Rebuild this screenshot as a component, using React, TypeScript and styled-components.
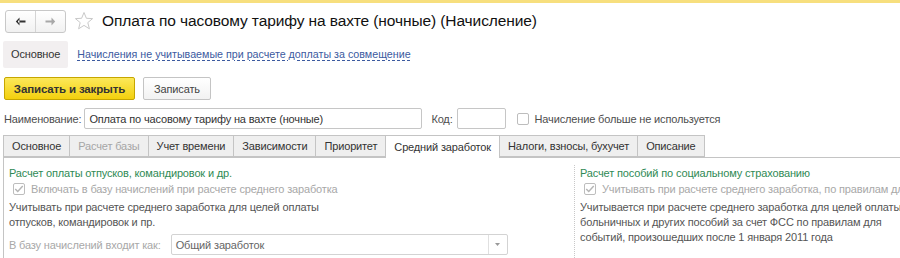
import React from "react";
import styled, { createGlobalStyle } from "styled-components";

const GlobalStyle = createGlobalStyle`
  html, body {
    margin: 0;
    padding: 0;
    background: #fff;
    font-family: "Liberation Sans", Arial, sans-serif;
    color: #4d4d4d;
  }
`;

const Page = styled("div")`
  width: 900px;
  height: 258px;
  overflow: hidden;
  border-top: 3px solid #f7df7e;
  box-sizing: border-box;
  font-size: 11px;
  letter-spacing: -0.15px;
`;

const Header = styled("div")`
  display: flex;
  align-items: center;
  height: 33px;
  padding: 3px 0 0 5px;
  box-sizing: border-box;
`;

const NavGroup = styled("div")`
  display: flex;
  height: 21px;
  border: 1px solid #c8c8c8;
  border-radius: 3px;
  background: linear-gradient(#ffffff, #f1f1f1);
`;

const NavButton = styled("div")<{ $first?: boolean }>`
  width: 29px;
  display: flex;
  align-items: center;
  justify-content: center;
  ${({ $first }) => $first && `border-right: 1px solid #d4d4d4;`}
`;

const Star = styled("div")`
  margin-left: 8px;
  width: 20px;
  height: 20px;
  display: flex;
`;

const Title = styled("h1")`
  margin: 0 0 0 8px;
  font-size: 15.5px;
  letter-spacing: -0.1px;
  font-weight: normal;
  color: #111;
  white-space: nowrap;
`;

const SubNav = styled("div")`
  display: flex;
  align-items: center;
  gap: 9px;
  padding: 3px 0 0 3px;
  height: 30px;
`;

const SubNavTab = styled("div")`
  height: 27px;
  padding: 0 8px;
  display: flex;
  align-items: center;
  background: #f2eff0;
  border-radius: 2px;
  color: #333;
`;

const SubNavLink = styled("a")`
  font-size: 10.7px;
  letter-spacing: 0;
  color: #3c5aa0;
  text-decoration: underline dashed;
  text-underline-offset: 2px;
  text-decoration-thickness: 1px;
`;

const Toolbar = styled("div")`
  display: flex;
  gap: 8px;
  padding: 8px 0 0 4px;
`;

const Button = styled("div")<{ $primary?: boolean }>`
  height: 23px;
  box-sizing: border-box;
  display: flex;
  align-items: center;
  justify-content: center;
  white-space: nowrap;
  border-radius: 2px;
  ${({ $primary }) =>
    $primary
      ? `
    background: linear-gradient(#fce85a, #f3d00e);
    border: 1px solid #c6a600;
    font-weight: bold;
    font-size: 11.5px;
    color: #333;
    width: 131px;
  `
      : `
    background: linear-gradient(#ffffff, #f2f2f2);
    border: 1px solid #c4c4c4;
    color: #444;
    width: 68px;
  `}
`;

const FieldRow = styled("div")`
  display: flex;
  align-items: center;
  padding: 8px 0 0 4px;
  height: 21px;
`;

const Label = styled("span")<{ $ml?: number }>`
  margin-left: ${({ $ml }) => $ml ?? 0}px;
  color: #4d4d4d;
  white-space: nowrap;
`;

const Input = styled("div")<{ $w: number; $ml: number }>`
  width: ${({ $w }) => $w}px;
  margin-left: ${({ $ml }) => $ml}px;
  height: 21px;
  box-sizing: border-box;
  border: 1px solid #c6c6c6;
  border-radius: 2px;
  display: flex;
  align-items: center;
  padding-left: 4px;
  color: #333;
  white-space: nowrap;
  overflow: hidden;
`;

const Box = styled("span")<{ $ml?: number }>`
  width: 12px;
  height: 12px;
  box-sizing: border-box;
  border: 1px solid #bdbdbd;
  border-radius: 2px;
  margin-left: ${({ $ml }) => $ml ?? 0}px;
  margin-right: 6px;
  display: inline-flex;
  align-items: center;
  justify-content: center;
  background: #fff;
  flex-shrink: 0;
`;

const Tabs = styled("div")`
  display: flex;
  margin: 6px 0 0 3px;
  height: 22px;
  border-bottom: 1px solid #c4c4c4;
`;

const Tab = styled("div")<{ $active?: boolean; $disabled?: boolean }>`
  height: 22px;
  box-sizing: border-box;
  padding: 0 8px;
  display: flex;
  align-items: center;
  white-space: nowrap;
  border: 1px solid #c4c4c4;
  border-left: none;
  &:first-child {
    border-left: 1px solid #c4c4c4;
  }
  background: ${({ $active }) => ($active ? "#fff" : "#efefef")};
  color: ${({ $disabled }) => ($disabled ? "#a6a6a6" : "#333")};
  ${({ $active }) => $active && `height: 23px; border-bottom: none; margin-bottom: -1px;`}
`;

const Panel = styled("div")`
  display: flex;
  margin-left: 3px;
  border-left: 1px solid #c4c4c4;
  height: 110px;
`;

const Column = styled("div")<{ $w: number; $dotted?: boolean }>`
  width: ${({ $w }) => $w}px;
  flex-shrink: 0;
  padding: 8px 0 0 5px;
  box-sizing: border-box;
  overflow: hidden;
  ${({ $dotted }) => $dotted && `border-left: 1px dotted #c8c8c8; margin-top: 7px; padding-top: 1px;`}
  white-space: nowrap;
`;

const GroupTitle = styled("div")`
  color: #2f8a55;
  line-height: 15px;
`;

const CheckLine = styled("div")`
  display: flex;
  align-items: center;
  color: #a8a8a8;
  height: 16px;
  margin-left: 4px;
`;

const Note = styled("div")`
  color: #555;
  line-height: 15px;
  margin-top: 3px;
`;

const SelectRow = styled("div")`
  display: flex;
  align-items: center;
  margin-top: 4px;
  color: #a8a8a8;
`;

const Select = styled("div")`
  width: 337px;
  margin-left: 10px;
  height: 21px;
  box-sizing: border-box;
  border: 1px solid #d3d3d3;
  border-radius: 2px;
  display: flex;
  align-items: center;
  color: #666;
  padding-left: 4px;
`;

const SelectText = styled("span")`
  flex: 1;
`;

const SelectArrow = styled("span")`
  width: 18px;
  height: 100%;
  border-left: 1px solid #e0e0e0;
  display: flex;
  align-items: center;
  justify-content: center;
`;

const Check = () => (
  <svg width="12" height="10" viewBox="0 0 12 10">
    <path d="M1.5 5 L4.5 8 L10.5 1.5" fill="none" stroke="#b5b5b5" strokeWidth="1.8" />
  </svg>
);

export default function App() {
  return (
    <>
      <GlobalStyle />
      <Page>
        <Header>
          <NavGroup>
            <NavButton $first>
              <svg width="11" height="9" viewBox="0 0 11 9">
                <path d="M4.5 0.5 L0.8 4.5 L4.5 8.5 Z M3 3.5 H10.5 V5.5 H3 Z" fill="#333" />
              </svg>
            </NavButton>
            <NavButton>
              <svg width="11" height="9" viewBox="0 0 11 9">
                <path d="M6.5 0.5 L10.2 4.5 L6.5 8.5 Z M0.5 3.5 H8 V5.5 H0.5 Z" fill="#a8a8a8" />
              </svg>
            </NavButton>
          </NavGroup>
          <Star>
            <svg width="20" height="20" viewBox="0 0 20 20">
              <path
                d="M10 1.5 L12.4 7.3 L18.6 7.6 L13.8 11.6 L15.4 17.8 L10 14.4 L4.6 17.8 L6.2 11.6 L1.4 7.6 L7.6 7.3 Z"
                fill="none"
                stroke="#c9c9c9"
                strokeWidth="1"
              />
            </svg>
          </Star>
          <Title>Оплата по часовому тарифу на вахте (ночные) (Начисление)</Title>
        </Header>

        <SubNav>
          <SubNavTab>Основное</SubNavTab>
          <SubNavLink>Начисления не учитываемые при расчете доплаты за совмещение</SubNavLink>
        </SubNav>

        <Toolbar>
          <Button $primary>Записать и закрыть</Button>
          <Button>Записать</Button>
        </Toolbar>

        <FieldRow>
          <Label>Наименование:</Label>
          <Input $w={338} $ml={3}>Оплата по часовому тарифу на вахте (ночные)</Input>
          <Label $ml={9}>Код:</Label>
          <Input $w={49} $ml={4} />
          <Box $ml={11} />
          <Label>Начисление больше не используется</Label>
        </FieldRow>

        <Tabs>
          <Tab>Основное</Tab>
          <Tab $disabled>Расчет базы</Tab>
          <Tab>Учет времени</Tab>
          <Tab>Зависимости</Tab>
          <Tab>Приоритет</Tab>
          <Tab $active>Средний заработок</Tab>
          <Tab>Налоги, взносы, бухучет</Tab>
          <Tab>Описание</Tab>
        </Tabs>

        <Panel>
          <Column $w={570}>
            <GroupTitle>Расчет оплаты отпусков, командировок и др.</GroupTitle>
            <CheckLine>
              <Box>
                <Check />
              </Box>
              Включать в базу начислений при расчете среднего заработка
            </CheckLine>
            <Note>
              Учитывать при расчете среднего заработка для целей оплаты
              <br />
              отпусков, командировок и пр.
            </Note>
            <SelectRow>
              В базу начислений входит как:
              <Select>
                <SelectText>Общий заработок</SelectText>
                <SelectArrow>
                  <svg width="5" height="3" viewBox="0 0 5 3">
                    <path d="M0 0 H5 L2.5 3 Z" fill="#999" />
                  </svg>
                </SelectArrow>
              </Select>
            </SelectRow>
          </Column>
          <Column $w={326} $dotted>
            <GroupTitle>Расчет пособий по социальному страхованию</GroupTitle>
            <CheckLine>
              <Box>
                <Check />
              </Box>
              Учитывать при расчете среднего заработка, по правилам для
            </CheckLine>
            <Note>
              Учитывается при расчете среднего заработка для целей оплаты
              <br />
              больничных и других пособий за счет ФСС по правилам для
              <br />
              событий, произошедших после 1 января 2011 года
            </Note>
          </Column>
        </Panel>
      </Page>
    </>
  );
}
